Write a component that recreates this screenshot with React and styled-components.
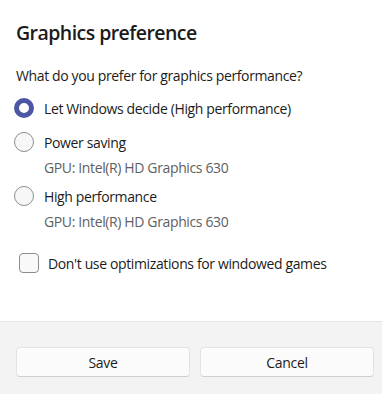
import React from "react";
import styled, { createGlobalStyle } from "styled-components";

const Global = createGlobalStyle`
  html, body { margin: 0; padding: 0; background: #ffffff; overflow: hidden; }
  body { font-family: "Open Sans", "Noto Sans", "Liberation Sans", sans-serif; color: #1b1b1b; }
  * { box-sizing: border-box; }
`;

const Dialog = styled.div`
  width: 390px;
  height: 394px;
  display: flex;
  flex-direction: column;
  background: #ffffff;
`;

const Body = styled.div`
  flex: 1;
  padding: 19px 16px 0 14px;
  display: flex;
  flex-direction: column;
`;

const Title = styled.h1`
  margin: 0 0 0 2px;
  font-size: 19.5px;
  line-height: 28px;
  font-weight: 600;
  letter-spacing: -0.55px;
`;

const Question = styled.p`
  margin: 19px 0 0 2px;
  font-size: 14px;
  line-height: 20px;
  letter-spacing: -0.37px;
`;

const Options = styled.div`
  margin-top: 6px;
  display: flex;
  flex-direction: column;
  gap: 2px;
`;

const Option = styled.div`
  display: flex;
  flex-direction: column;
`;

const Row = styled.label`
  display: flex;
  align-items: center;
  height: 32px;
  gap: ${(p) => p.$gap || 10}px;
  font-size: 14px;
  letter-spacing: -0.37px;
  padding-left: ${(p) => p.$indent || 0}px;
`;

const Radio = styled.span`
  width: 20px;
  height: 20px;
  border-radius: 50%;
  flex: none;
  background: ${(p) => (p.$checked ? "#ffffff" : "#f7f7f7")};
  border: ${(p) => (p.$checked ? "5px solid #4c56a3" : "1px solid #8d8d8d")};
`;

const Desc = styled.div`
  padding-left: 30px;
  font-size: 14px;
  line-height: 20px;
  color: #606060;
  letter-spacing: -0.37px;
`;

const Check = styled.span`
  width: 20px;
  height: 20px;
  border-radius: 4px;
  flex: none;
  background: #f9f9f9;
  border: 1px solid #8d8d8d;
`;

const CheckRow = styled(Row)`
  margin-top: 15px;
`;

const Footer = styled.div`
  height: 73px;
  flex: none;
  background: #f3f3f3;
  border-top: 1px solid #e5e5e5;
  padding: 25px 16px 0;
  display: grid;
  grid-template-columns: 1fr 1fr;
  gap: 10px;
  align-items: start;
`;

const Button = styled.button`
  height: 30px;
  border-radius: 4px;
  border: 1px solid #e3e3e3;
  border-bottom-color: #cfcfcf;
  background: #fbfbfb;
  font-family: inherit;
  font-size: 14px;
  color: #1b1b1b;
  letter-spacing: -0.3px;
  padding: 0;
`;

const options = [
  { label: "Let Windows decide (High performance)", checked: true },
  { label: "Power saving", desc: "GPU: Intel(R) HD Graphics 630" },
  { label: "High performance", desc: "GPU: Intel(R) HD Graphics 630" },
];

export default function App() {
  return (
    <>
      <Global />
      <Dialog>
        <Body>
          <Title>Graphics preference</Title>
          <Question>What do you prefer for graphics performance?</Question>
          <Options>
            {options.map((o) => (
              <Option key={o.label}>
                <Row>
                  <Radio $checked={o.checked} />
                  {o.label}
                </Row>
                {o.desc && <Desc>{o.desc}</Desc>}
              </Option>
            ))}
          </Options>
          <CheckRow $indent={5} $gap={9}>
            <Check />
            Don't use optimizations for windowed games
          </CheckRow>
        </Body>
        <Footer>
          <Button>Save</Button>
          <Button>Cancel</Button>
        </Footer>
      </Dialog>
    </>
  );
}
